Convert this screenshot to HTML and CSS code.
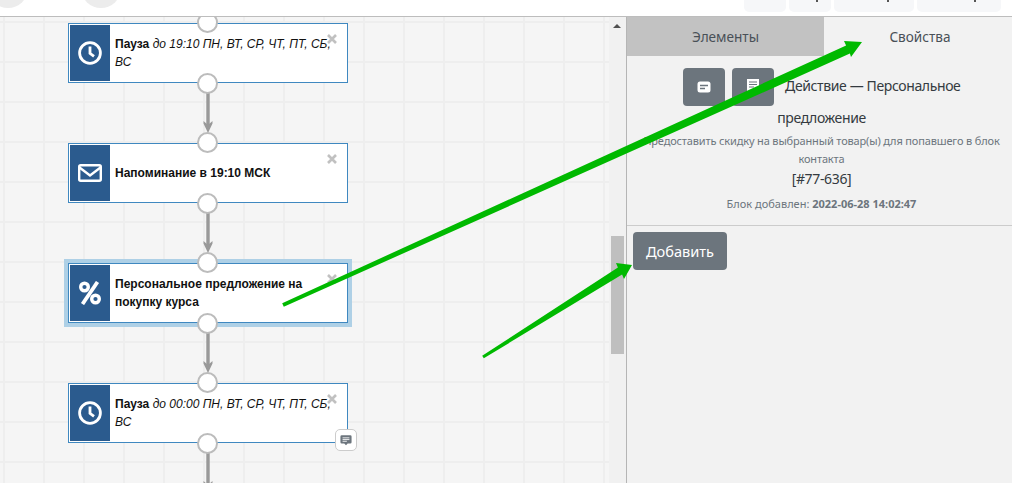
FILE: index.html
```html
<!DOCTYPE html>
<html lang="ru">
<head>
<meta charset="utf-8">
<title>Воронка</title>
<link rel="stylesheet" href="styles.css">
</head>
<body>
<svg width="0" height="0" class="defs">
  <symbol id="i-x" viewBox="0 0 10 10"><path d="M1 1 9 9M9 1 1 9" fill="none" stroke="currentColor" stroke-width="2.6"/></symbol>
  <symbol id="i-clock" viewBox="0 0 24 24"><circle cx="12" cy="12" r="10.400" fill="none" stroke="currentColor" stroke-width="2.800"/><path d="M12 5.500V12.400L16 15.400" fill="none" stroke="currentColor" stroke-width="2.800"/></symbol>
  <symbol id="i-link" viewBox="0 0 12 40"><path d="M6 0V34" stroke="#999" stroke-width="3.4"/><path d="M1.500 28 6 32 10.500 28 10.500 30.500 6 40 1.500 30.500Z" fill="#999"/></symbol>
  <symbol id="i-note" viewBox="0 0 14 14"><path d="M2 1.500H12A1.500 1.500 0 0 1 13.500 3V9.500A1.500 1.500 0 0 1 12 11H9L7 13 5 11H2A1.500 1.500 0 0 1 .5 9.500V3A1.500 1.500 0 0 1 2 1.500Z" fill="currentColor"/><path d="M3 4.500H11M3 6.500H11M3 8.500H8" stroke="#fff" stroke-width="1"/></symbol>
</svg>
<div class="page">
  <header class="topbar">
    <div class="round first"></div>
    <div class="round"></div>
    <div class="top-actions">
      <div class="top-btn w1"></div>
      <div class="top-btn w1 mark-a"></div>
      <div class="top-btn w2 mark-b"></div>
      <div class="top-btn w3 mark-c"></div>
    </div>
  </header>
  <main class="main">
    <section class="canvas">
      <article class="node n1">
        <svg class="link"><use href="#i-link"/></svg>
        <div class="node-icon"><svg class="ico-clock"><use href="#i-clock"/></svg></div>
        <p class="node-text"><b>Пауза</b> <i>до 19:10 ПН, ВТ, СР, ЧТ, ПТ, СБ, ВС</i></p>
        <svg class="close"><use href="#i-x"/></svg>
        <span class="port top"></span><span class="port bottom"></span>
      </article>
      <article class="node n2">
        <svg class="link"><use href="#i-link"/></svg>
        <div class="node-icon">
          <svg class="ico-mail" viewBox="0 0 24 18"><rect x="1.200" y="1.200" width="21.600" height="15.600" rx="1.500" fill="none" stroke="currentColor" stroke-width="2.400"/><path d="M1.500 3.500 12 11.500 22.500 3.500" fill="none" stroke="currentColor" stroke-width="2.400"/></svg>
        </div>
        <p class="node-text"><b>Напоминание в 19:10 МСК</b></p>
        <svg class="close"><use href="#i-x"/></svg>
        <span class="port top"></span><span class="port bottom"></span>
      </article>
      <article class="node n3 selected">
        <svg class="link"><use href="#i-link"/></svg>
        <div class="node-icon">
          <svg class="ico-percent" viewBox="0 0 22 24"><circle cx="5.500" cy="6" r="3.800" fill="none" stroke="currentColor" stroke-width="3.400"/><circle cx="16.500" cy="18" r="3.800" fill="none" stroke="currentColor" stroke-width="3.400"/><path d="M18.500 1 3.500 23" stroke="currentColor" stroke-width="3.800"/></svg>
        </div>
        <p class="node-text"><b>Персональное предложение на покупку курса</b></p>
        <svg class="close"><use href="#i-x"/></svg>
        <span class="port top"></span><span class="port bottom"></span>
      </article>
      <article class="node n4">
        <svg class="link"><use href="#i-link"/></svg>
        <div class="node-icon"><svg class="ico-clock"><use href="#i-clock"/></svg></div>
        <p class="node-text"><b>Пауза</b> <i>до 00:00 ПН, ВТ, СР, ЧТ, ПТ, СБ, ВС</i></p>
        <svg class="close"><use href="#i-x"/></svg>
        <span class="port top"></span><span class="port bottom"></span>
        <span class="badge"><svg><use href="#i-note"/></svg></span>
      </article>
    </section>
    <div class="scrollbar">
      <span class="scroll-up"></span>
      <span class="scroll-thumb"></span>
    </div>
    <aside class="panel">
      <nav class="tabs">
        <div class="tab">Элементы</div>
        <div class="tab active">Свойства</div>
      </nav>
      <div class="summary">
        <h2 class="title">
          <span class="btn square"><svg class="btn-ico" viewBox="0 0 14 12"><rect x=".5" y=".5" width="13" height="11" rx="2.500" fill="#fff"/><path d="M3 4.500H11M3 7.500H8" stroke="#6c757d" stroke-width="1.300"/></svg></span>
          <span class="btn square"><svg class="btn-ico tall" viewBox="0 0 14 14"><path d="M1 1H13V9L9 13H1Z" fill="#fff"/><path d="M3 4H11M3 6.500H11M3 9H8" stroke="#6c757d" stroke-width="1.200"/></svg></span>
          <span class="title-text">Действие — Персональное предложение</span>
        </h2>
        <p class="desc">Предоставить скидку на выбранный товар(ы) для попавшего в блок контакта</p>
        <p class="block-id">[#77-636]</p>
        <p class="added">Блок добавлен: <b>2022-06-28 14:02:47</b></p>
      </div>
      <div class="actions"><button class="btn add">Добавить</button></div>
    </aside>
  </main>
</div>
<svg class="annotations" viewBox="0 0 1012 483">
  <path d="M282.200 303.200 846.100 45.400 844 41 862 42 851 57 849.900 53.600 283.800 306.800Z" fill="#00b900"/>
  <path d="M482.200 355.700 617.900 267.600 616 263 632 265 624 279 622.100 274.400 483.800 358.300Z" fill="#00b900"/>
</svg>
</body>
</html>
```
FILE: styles.css
```css
* { box-sizing: border-box; }
html, body { margin: 0; height: 100%; overflow: hidden; }
body { position: relative; background: #fff; font-family: "Liberation Sans", Arial, sans-serif; color: #212529; }
.defs { position: absolute; }
.page { display: flex; flex-direction: column; height: 483px; }

.topbar { display: flex; align-items: flex-start; height: 17px; flex: none; border-bottom: 1px solid #bdbdbd; overflow: hidden; background: #fff; }
.round { width: 40px; height: 40px; border-radius: 50%; background: #ececec; margin-top: -32px; margin-left: 53px; flex: none; }
.round.first { margin-left: -12px; }
.top-actions { display: flex; gap: 3px; margin-left: auto; margin-right: 11px; }
.top-btn { position: relative; height: 12px; background: #f6f7f9; border-radius: 0 0 5px 5px; }
.w1 { width: 42px; }
.w2 { width: 80px; }
.w3 { width: 84px; }
.mark-a::after, .mark-b::after, .mark-c::after { content: ""; position: absolute; top: 0; width: 2px; height: 2px; background: #555; }
.mark-a::after { left: 27px; }
.mark-b::after { left: 53px; }
.mark-c::after { left: 57px; }

.main { display: flex; flex: 1; min-height: 0; }
.canvas {
  position: relative; flex: 1; overflow: hidden; background-color: #f5f5f5;
  background-image: linear-gradient(90deg, #eeeeee 2px, transparent 2px), linear-gradient(#eeeeee 2px, transparent 2px);
  background-size: 40px 40px;
  background-position: 3px 0, 0 4px;
}

.node { position: absolute; left: 68px; width: 280px; height: 60px; display: flex; padding: 1px; background: #fff; border: 1px solid #3f88c0; }
.n1 { top: 6px; }
.n2 { top: 126px; }
.n3 { top: 246px; }
.n4 { top: 366px; }
.selected { box-shadow: 0 0 0 4px #aed0e6; }
.node-icon { flex: none; width: 40px; display: flex; align-items: center; justify-content: center; background: #2b5b8e; color: #fff; }
.ico-clock { width: 24px; height: 24px; }
.ico-mail { width: 24px; height: 18px; }
.ico-percent { width: 22px; height: 24px; }
.node-text { margin: 0; padding: 0 4px 0 5px; flex: 1; align-self: center; font-size: 12px; line-height: 18px; color: #111; }
.close { position: absolute; top: 10px; right: 10px; width: 10px; height: 10px; color: #bbb; opacity: .9; }
.port { position: absolute; left: 128px; width: 21px; height: 21px; border-radius: 50%; background: #fff; border: 2px solid #bcbcbc; }
.port.top { top: -12px; }
.port.bottom { bottom: -12px; }
.link { position: absolute; left: 133px; top: 69px; width: 12px; height: 40px; }
.badge { position: absolute; right: -10px; bottom: -9px; width: 22px; height: 22px; display: flex; align-items: center; justify-content: center; background: #fff; border: 1px solid #ccc; border-radius: 5px; color: #6c757d; }
.badge svg { width: 12px; height: 12px; }

.scrollbar { position: relative; flex: none; width: 17px; background: #f1f1f1; }
.scroll-up { position: absolute; left: 4px; top: 7px; border: 4px solid transparent; border-top: 0; border-bottom: 4px solid #505050; }
.scroll-thumb { position: absolute; left: 2px; top: 219px; width: 13px; height: 118px; background: #bfbfbf; }

.panel { flex: none; width: 386px; background: #f2f2f2; border-left: 1px solid #b5b5b5; font-family: "Noto Sans", sans-serif; }
.tabs { display: flex; height: 39px; }
.tab { display: flex; align-items: center; justify-content: center; font-size: 13.600px; color: #495057; background: #c2c2c2; }
.tab:first-child { width: 197px; }
.tab.active { flex: 1; padding-left: 4px; background: #f2f2f2; }
.summary { padding: 12px 9px 0 13px; text-align: center; height: 170px; border-bottom: 1px solid #ccc; }
.title { margin: 0; font-size: 14px; letter-spacing: -.38px; font-weight: 400; line-height: 24px; color: #343a40; }
.btn { background: #6c757d; color: #fff; border: 0; border-radius: 4px; }
.square { display: inline-flex; align-items: center; justify-content: center; width: 42px; height: 38px; margin-right: 4px; vertical-align: middle; }
.title-text { margin-left: 4px; }
.btn-ico { width: 14px; height: 12px; }
.btn-ico.tall { height: 14px; margin-top: -4px; }
.desc { margin: 2px 0 0; font-size: 11px; letter-spacing: -.15px; line-height: 18px; color: #6c757d; }
.block-id { margin: -1px 0 0; font-size: 14px; letter-spacing: -.35px; line-height: 24px; color: #343a40; }
.added { margin: 4px 0 0; font-size: 11px; line-height: 18px; color: #6c757d; }
.actions { padding: 6px; }
.add { display: block; width: 94px; height: 38px; padding: 0; font: inherit; font-size: 14.600px; text-align: center; }

.annotations { position: absolute; left: 0; top: 0; width: 1012px; height: 483px; pointer-events: none; }
```
